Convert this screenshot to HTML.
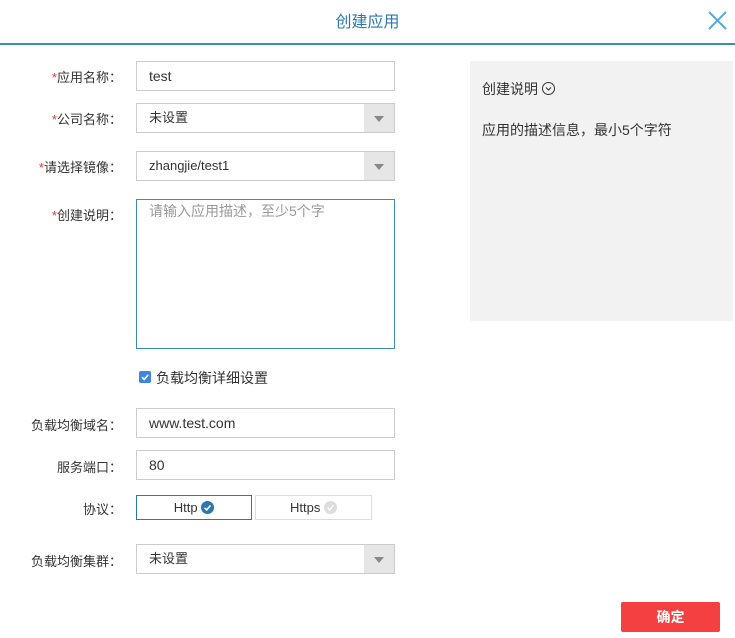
<!DOCTYPE html>
<html><head><meta charset="utf-8"><style>
*{box-sizing:border-box;margin:0;padding:0}
body{width:735px;height:638px;background:#fff;font-family:"Liberation Sans","Noto Sans CJK SC",sans-serif;font-size:13px;color:#333;position:relative;overflow:hidden}
.a{position:absolute}
.title{left:0;width:735px;top:8px;text-align:center;font-size:16px;color:#2a79ad}
.line{left:0;top:43px;width:735px;height:2px;background:#3a8db5}
.lbl{width:122px;left:0;text-align:right;font-size:13px;color:#333}
.lbl b{color:#e33;font-weight:normal}
.in{left:136px;width:259px;height:30px;border:1px solid #ccc;padding-left:12px;line-height:28px;font-size:14px;color:#333}
.sel{font-size:13px}
.sel i{position:absolute;right:0;top:0;width:30px;height:28px;background:#e6e6e6}
.sel i:after{content:"";position:absolute;left:10px;top:12px;border-left:5px solid transparent;border-right:5px solid transparent;border-top:6px solid #888}
</style></head><body>
<div class="a title">创建应用</div>
<svg class="a" style="left:708px;top:11px" width="19" height="19" viewBox="0 0 19 19"><path d="M1 1L18 18M18 1L1 18" stroke="#5aa9d6" stroke-width="2"/></svg>
<div class="a line"></div>

<div class="a lbl" style="top:67px"><b>*</b>应用名称：</div>
<div class="a in" style="top:61px">test</div>
<div class="a lbl" style="top:109px"><b>*</b>公司名称：</div>
<div class="a in sel" style="top:103px">未设置<i></i></div>
<div class="a lbl" style="top:157px"><b>*</b>请选择镜像：</div>
<div class="a in sel" style="top:151px">zhangjie/test1<i></i></div>
<div class="a lbl" style="top:205px"><b>*</b>创建说明：</div>
<div class="a in" style="top:199px;height:150px;border-color:#3a8db5;line-height:20px;padding-top:1px;color:#999;font-size:14px">请输入应用描述，至少5个字</div>

<div class="a" style="left:139px;top:371px;width:12px;height:12px;border-radius:2px;background:#3b86e0"></div>
<svg class="a" style="left:139px;top:371px" width="12" height="12"><path d="M3 6.2L5.2 8.4L9.2 3.8" stroke="#fff" stroke-width="1.6" fill="none"/></svg>
<div class="a" style="left:156px;top:368px;font-size:14px">负载均衡详细设置</div>

<div class="a lbl" style="top:415px">负载均衡域名：</div>
<div class="a in" style="top:408px">www.test.com</div>
<div class="a lbl" style="top:457px">服务端口：</div>
<div class="a in" style="top:450px">80</div>
<div class="a lbl" style="top:499px">协议：</div>
<div class="a" style="left:136px;top:495px;width:116px;height:25px;border:1px solid #2a79ad;text-align:center;line-height:23px">Http <span style="display:inline-block;width:13px;height:13px;border-radius:50%;background:#2a79ad;vertical-align:-2px;position:relative"><svg width="13" height="13" style="position:absolute;left:0;top:0"><path d="M3.5 6.8L5.7 8.8L9.5 4.5" stroke="#fff" stroke-width="1.6" fill="none"/></svg></span></div>
<div class="a" style="left:255px;top:495px;width:117px;height:25px;border:1px solid #ddd;text-align:center;line-height:23px">Https <span style="display:inline-block;width:13px;height:13px;border-radius:50%;background:#ddd;vertical-align:-2px;position:relative"><svg width="13" height="13" style="position:absolute;left:0;top:0"><path d="M3.5 6.8L5.7 8.8L9.5 4.5" stroke="#fff" stroke-width="1.6" fill="none"/></svg></span></div>
<div class="a lbl" style="top:551px">负载均衡集群：</div>
<div class="a in sel" style="top:544px">未设置<i></i></div>

<div class="a" style="left:470px;top:61px;width:263px;height:260px;background:#f2f2f2"></div>
<div class="a" style="left:482px;top:79px;font-size:14px">创建说明 <span style="display:inline-block;width:13px;height:13px;border:1px solid #333;border-radius:50%;vertical-align:-1px;position:relative"><svg width="11" height="11" style="position:absolute;left:0;top:0"><path d="M3 4.5L5.5 7L8 4.5" stroke="#333" stroke-width="1.1" fill="none"/></svg></span></div>
<div class="a" style="left:482px;top:120px;font-size:14px">应用的描述信息，最小5个字符</div>

<div class="a" style="left:621px;top:602px;width:99px;height:30px;background:#f44040;border-radius:2px;color:#fff;text-align:center;line-height:30px;font-size:14px;font-weight:bold">确定</div>
</body></html>
